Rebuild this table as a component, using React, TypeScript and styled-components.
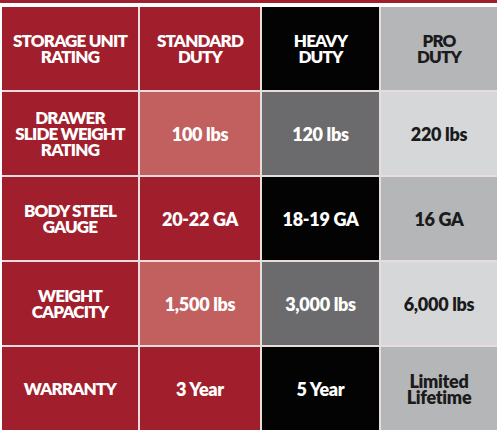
import React from 'react';
import styled, { createGlobalStyle } from 'styled-components';

const GlobalStyle = createGlobalStyle`
  body {
    margin: 0;
    background: #ffffff;
    font-family: Lato, "Open Sans", "Liberation Sans", sans-serif;
  }
`;

const Page = styled.div`
  width: 500px;
  height: 445px;
  overflow: hidden;
  background: #ffffff;
`;

const TopStrip = styled.div`
  width: 497px;
  height: 3px;
  background: #a11f2c;
  margin-bottom: 4px;
`;

const Table = styled.div`
  display: grid;
  grid-template-columns: 136px 120px 117px 116px;
  grid-auto-rows: 83px;
  gap: 2px;
  margin-left: 2px;
  width: 495px;
  background: #e9dcdd;
`;

const Cell = styled.div<{ $bg: string; $color?: string; $upper?: boolean }>`
  display: flex;
  align-items: center;
  justify-content: center;
  text-align: center;
  background: ${(p) => p.$bg};
  color: ${(p) => p.$color || '#ffffff'};
  font-size: ${(p) => (p.$upper ? '17px' : '18px')};
  font-weight: 800;
  line-height: 16px;
  letter-spacing: ${(p) => (p.$upper ? '-0.8px' : '-0.3px')};
  text-transform: ${(p) => (p.$upper ? 'uppercase' : 'none')};
  white-space: pre-line;
`;

const RED = '#a11f2c';
const PINK = '#c1605f';
const BLACK = '#030303';
const GREY = '#6b6b6d';
const LIGHT = '#d6d7d9';
const SILVER = '#b5b6b8';

const headers = [
  { text: 'Storage Unit\nRating', bg: RED },
  { text: 'Standard\nDuty', bg: RED },
  { text: 'Heavy\nDuty', bg: BLACK },
  { text: 'Pro\nDuty', bg: SILVER, color: '#1b1b1b' },
];

const rows = [
  { label: 'Drawer\nSlide Weight\nRating', values: ['100 lbs', '120 lbs', '220 lbs'] },
  { label: 'Body Steel\nGauge', values: ['20-22 GA', '18-19 GA', '16 GA'] },
  { label: 'Weight\nCapacity', values: ['1,500 lbs', '3,000 lbs', '6,000 lbs'] },
  { label: 'Warranty', values: ['3 Year', '5 Year', 'Limited\nLifetime'] },
];

const App = () => {
  return (
    <>
      <GlobalStyle />
      <Page>
        <TopStrip />
        <Table>
          {headers.map((h) => (
            <Cell key={h.text} $bg={h.bg} $color={h.color} $upper>
              {h.text}
            </Cell>
          ))}
          {rows.map((row, i) => {
            const odd = i % 2 === 0;
            return (
              <React.Fragment key={row.label}>
                <Cell $bg={RED} $upper>{row.label}</Cell>
                <Cell $bg={odd ? PINK : RED}>{row.values[0]}</Cell>
                <Cell $bg={odd ? GREY : BLACK}>{row.values[1]}</Cell>
                <Cell $bg={odd ? LIGHT : SILVER} $color="#1b1b1b">{row.values[2]}</Cell>
              </React.Fragment>
            );
          })}
        </Table>
      </Page>
    </>
  );
};

export default App;
